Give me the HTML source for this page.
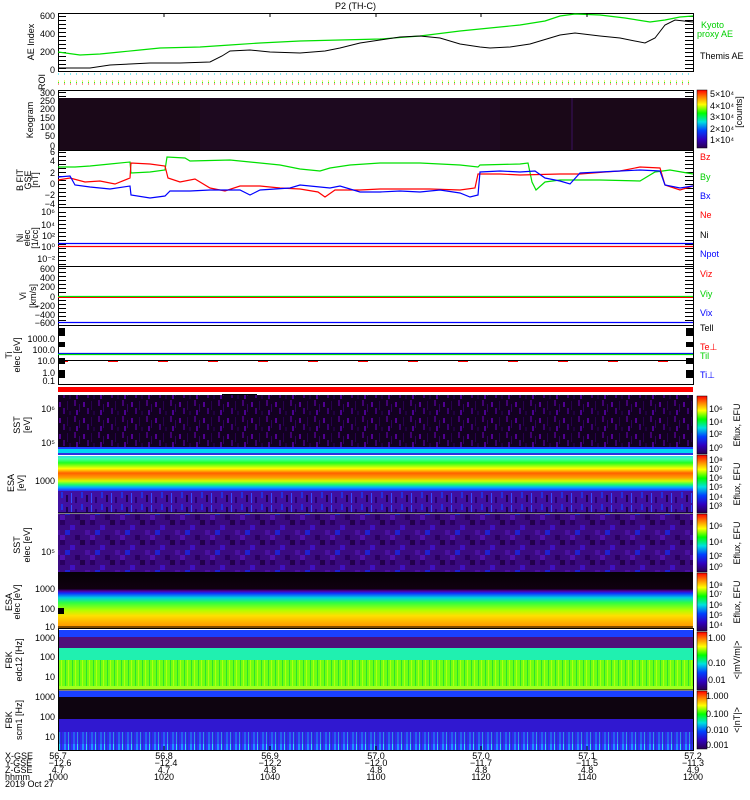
<!DOCTYPE html>
<html><head><meta charset="utf-8"><style>
html,body{margin:0;padding:0;background:#fff;width:750px;height:800px;overflow:hidden}
svg{display:block}
text{font-family:"Liberation Sans",sans-serif;font-size:9px;fill:#000}
</style></head><body>
<svg width="750" height="800" viewBox="0 0 750 800" xmlns="http://www.w3.org/2000/svg">
<defs>
<linearGradient id="cb" x1="0" y1="1" x2="0" y2="0">
<stop offset="0" stop-color="#2a0050"/><stop offset="0.15" stop-color="#3000c0"/><stop offset="0.3" stop-color="#0040ff"/><stop offset="0.45" stop-color="#00e0e0"/><stop offset="0.6" stop-color="#00ff00"/><stop offset="0.75" stop-color="#ffff00"/><stop offset="0.88" stop-color="#ff8000"/><stop offset="1" stop-color="#ff0000"/></linearGradient>
<linearGradient id="esai" x1="0" y1="0" x2="0" y2="1">
<stop offset="0" stop-color="#30e0e0"/><stop offset="0.05" stop-color="#40ffb0"/><stop offset="0.12" stop-color="#20ff20"/><stop offset="0.22" stop-color="#ffff00"/><stop offset="0.3" stop-color="#ff6000"/><stop offset="0.38" stop-color="#ffa000"/><stop offset="0.44" stop-color="#d0ff00"/><stop offset="0.5" stop-color="#20ff60"/><stop offset="0.55" stop-color="#00b0ff"/><stop offset="0.6" stop-color="#2040ff"/><stop offset="0.68" stop-color="#4010b0"/><stop offset="1" stop-color="#300880"/></linearGradient>
<linearGradient id="esae" x1="0" y1="0" x2="0" y2="1">
<stop offset="0" stop-color="#050005"/><stop offset="0.3" stop-color="#100010"/><stop offset="0.34" stop-color="#5000a0"/><stop offset="0.38" stop-color="#1030ff"/><stop offset="0.46" stop-color="#00d0e0"/><stop offset="0.55" stop-color="#30ff40"/><stop offset="0.68" stop-color="#b0ff00"/><stop offset="0.78" stop-color="#ffe000"/><stop offset="0.9" stop-color="#ffb000"/><stop offset="1" stop-color="#ff9000"/></linearGradient>
<pattern id="noise" width="24" height="16" patternUnits="userSpaceOnUse">
<rect width="24" height="16" fill="#120020"/>
<rect x="2" y="0" width="2" height="6" fill="#400070"/><rect x="7" y="4" width="1" height="8" fill="#300060"/><rect x="11" y="2" width="2" height="5" fill="#500090"/><rect x="15" y="8" width="2" height="6" fill="#3a0070"/><rect x="19" y="1" width="1" height="9" fill="#280050"/><rect x="4" y="10" width="2" height="5" fill="#4a0090"/><rect x="21" y="11" width="2" height="4" fill="#200040"/>
</pattern>
<pattern id="noise2" width="30" height="20" patternUnits="userSpaceOnUse">
<rect width="30" height="20" fill="#3a0a80"/>
<rect x="0" y="0" width="5" height="5" fill="#2a0060"/><rect x="10" y="5" width="5" height="5" fill="#4010c0"/><rect x="20" y="0" width="5" height="5" fill="#22004a"/><rect x="5" y="10" width="5" height="5" fill="#2020d0"/><rect x="15" y="15" width="5" height="5" fill="#2a0060"/><rect x="25" y="10" width="5" height="5" fill="#4a10a0"/><rect x="0" y="15" width="5" height="5" fill="#5010b0"/>
</pattern>
<pattern id="noise3" width="20" height="12" patternUnits="userSpaceOnUse">
<rect width="20" height="12" fill="#4010a0"/>
<rect x="1" y="0" width="2" height="6" fill="#2030e0"/><rect x="6" y="3" width="2" height="7" fill="#200050"/><rect x="11" y="1" width="1" height="10" fill="#3050ff"/><rect x="15" y="5" width="2" height="6" fill="#280070"/>
</pattern>
<pattern id="stripe" width="9" height="10" patternUnits="userSpaceOnUse">
<rect width="9" height="10" fill="#3030ff"/><rect x="1" width="2" height="10" fill="#2090ff"/><rect x="5" width="1" height="10" fill="#30e0f0"/><rect x="7" width="1" height="10" fill="#2040c0"/>
</pattern>
<pattern id="gstripe" width="7" height="10" patternUnits="userSpaceOnUse">
<rect width="7" height="10" fill="#70ff10"/><rect x="2" width="1" height="10" fill="#30e030"/><rect x="5" width="1" height="10" fill="#b0ff10"/></pattern>
<pattern id="lt" width="8" height="4" patternUnits="userSpaceOnUse"><rect x="0" y="0" width="8" height="1" fill="#000"/></pattern>
</defs>

<text x="335" y="9" font-size="10">P2 (TH-C)</text>

<!-- left minor ticks -->
<rect x="58" y="14" width="8" height="56" fill="url(#lt)"/>
<rect x="58" y="92" width="8" height="58" fill="url(#lt)"/>
<rect x="58" y="152" width="8" height="54" fill="url(#lt)"/>
<rect x="58" y="209" width="8" height="56" fill="url(#lt)"/>
<rect x="58" y="268" width="8" height="56" fill="url(#lt)"/>
<rect x="685" y="92" width="8" height="58" fill="url(#lt)"/>
<rect x="685" y="152" width="8" height="54" fill="url(#lt)"/>
<rect x="685" y="209" width="8" height="56" fill="url(#lt)"/>
<rect x="685" y="268" width="8" height="56" fill="url(#lt)"/>
<rect x="685" y="14" width="8" height="56" fill="url(#lt)"/>

<!-- AE panel -->
<rect x="58.5" y="13.5" width="635" height="58" fill="none" stroke="#000"/>
<polyline fill="none" stroke="#00e000" stroke-width="1.2" points="58,52 80,55 100,54 120,52 140,50 160,48 200,47 230,45 260,43 300,41 340,40 380,39 420,36 460,31 500,27 520,25 545,21 560,16 575,14 600,15 625,18 650,22 665,20 680,17 693,16"/>
<polyline fill="none" stroke="#000" stroke-width="1" points="58,68 90,68 110,65 130,64 150,63 180,63 210,62 222,56 230,51 250,50 270,52 300,53 325,51 340,48 360,43 380,40 400,37 420,36 440,38 460,44 480,47 490,48 510,47 530,44 550,38 560,35 575,33 600,36 620,38 645,43 655,38 665,25 675,20 693,22"/>
<text transform="translate(34,42) rotate(-90)" text-anchor="middle" font-size="8">AE Index</text>
<text x="55" y="19" text-anchor="end">600</text><text x="55" y="37" text-anchor="end">400</text><text x="55" y="55" text-anchor="end">200</text><text x="55" y="73" text-anchor="end">0</text>
<text x="701" y="28" style="fill:#00d000">Kyoto</text>
<text x="697" y="37" style="fill:#00d000">proxy AE</text>
<text x="700" y="59">Themis AE</text>

<!-- ROI -->
<line x1="58" y1="74" x2="693" y2="74" stroke="#00d8e8" stroke-dasharray="1,5"/>
<line x1="58" y1="81" x2="693" y2="81" stroke="#e8e800" stroke-dasharray="1,5"/>
<line x1="58" y1="82.5" x2="693" y2="82.5" stroke="#20ff20" stroke-dasharray="1,5"/>
<line x1="58" y1="84" x2="693" y2="84" stroke="#ff2020" stroke-dasharray="1,5"/>
<line x1="58" y1="90.5" x2="693" y2="90.5" stroke="#000"/>
<text transform="translate(45,82) rotate(-90)" text-anchor="middle" font-size="8">ROI</text>

<!-- Keogram -->
<rect x="58" y="98" width="635" height="52" fill="#1a0818"/>
<rect x="200" y="98" width="300" height="52" fill="#1f0a22" opacity="0.7"/>
<line x1="572" y1="98" x2="572" y2="150" stroke="#3a1060"/>
<rect x="58.5" y="90.5" width="635" height="60" fill="none" stroke="#000"/>
<text transform="translate(33,120) rotate(-90)" text-anchor="middle" font-size="8">Keogram</text>
<g font-size="8"><text x="55" y="96" text-anchor="end">300</text><text x="55" y="104" text-anchor="end">250</text><text x="55" y="112" text-anchor="end">200</text><text x="55" y="121" text-anchor="end">150</text><text x="55" y="130" text-anchor="end">100</text><text x="55" y="139" text-anchor="end">50</text><text x="55" y="149" text-anchor="end">0</text></g>
<rect x="697" y="90" width="10" height="58" fill="url(#cb)" stroke="#000" stroke-width="0.5"/>
<g font-size="8"><text x="710" y="97">5×10⁴</text><text x="710" y="109">4×10⁴</text><text x="710" y="120">3×10⁴</text><text x="710" y="132">2×10⁴</text><text x="710" y="143">1×10⁴</text></g>
<text transform="translate(742,112) rotate(-90)" text-anchor="middle" font-size="7">[counts]</text>

<!-- B panel -->
<rect x="58.5" y="150.5" width="635" height="57" fill="none" stroke="#000"/>
<polyline fill="none" stroke="#00e000" stroke-width="1.2" points="58,167 75,167 90,166 110,164 130,162 131,173 150,172 165,170 167,157 185,158 190,161 230,160 250,162 280,165 300,169 320,171 330,168 350,165 380,163 420,163 460,165 478,167 480,165 520,164 528,163 532,182 536,190 545,182 560,180 600,180 640,181 655,172 670,170 693,174"/>
<polyline fill="none" stroke="#ff0000" stroke-width="1.2" points="58,180 70,178 85,182 100,181 115,184 130,178 131,163 150,164 165,166 168,178 180,182 195,179 210,188 225,191 240,186 260,186 280,188 300,189 318,192 325,197 335,190 360,190 380,189 400,189 430,189 460,190 475,188 478,174 500,174 520,175 560,174 580,174 605,172 620,171 640,167 660,168 665,185 680,190 693,186"/>
<polyline fill="none" stroke="#0000ff" stroke-width="1.2" points="58,177 70,176 75,185 90,187 110,189 130,186 131,195 150,198 165,196 170,191 190,191 210,190 240,190 250,195 260,190 290,188 300,185 330,188 340,186 360,192 380,192 400,191 420,192 440,190 460,193 470,197 478,195 480,172 500,171 520,172 535,171 545,178 560,181 570,184 580,173 600,172 620,171 640,170 660,171 665,185 680,188 693,186"/>
<text transform="translate(23,180) rotate(-90)" text-anchor="middle" font-size="7">B FIT</text>
<text transform="translate(31,180) rotate(-90)" text-anchor="middle" font-size="6">GSE</text>
<text transform="translate(38,180) rotate(-90)" text-anchor="middle" font-size="7">[nT]</text>
<g font-size="8"><text x="55" y="155" text-anchor="end">6</text><text x="55" y="164" text-anchor="end">4</text><text x="55" y="176" text-anchor="end">2</text><text x="55" y="187" text-anchor="end">0</text><text x="55" y="198" text-anchor="end">−2</text><text x="55" y="207" text-anchor="end">−4</text></g>
<text x="700" y="160" style="fill:#ff0000">Bz</text><text x="700" y="180" style="fill:#00d000">By</text><text x="700" y="199" style="fill:#0000ff">Bx</text>

<!-- Ni -->
<rect x="58.5" y="207.5" width="635" height="59" fill="none" stroke="#000"/>
<line x1="58" y1="243.5" x2="693" y2="243.5" stroke="#0000ff" stroke-width="1.2"/>
<line x1="58" y1="246.5" x2="693" y2="246.5" stroke="#ff0000" stroke-width="1.2"/>
<text transform="translate(23,238) rotate(-90)" text-anchor="middle" font-size="7">Ni</text>
<text transform="translate(30,238) rotate(-90)" text-anchor="middle" font-size="6">elec</text>
<text transform="translate(38,238) rotate(-90)" text-anchor="middle" font-size="7">[1/cc]</text>
<g font-size="8"><text x="55" y="215" text-anchor="end">10⁶</text><text x="55" y="228" text-anchor="end">10⁴</text><text x="55" y="239" text-anchor="end">10²</text><text x="55" y="250" text-anchor="end">10⁰</text><text x="55" y="262" text-anchor="end">10⁻²</text></g>
<text x="700" y="218" style="fill:#ff0000">Ne</text><text x="700" y="238">Ni</text><text x="700" y="257" style="fill:#0000ff">Npot</text>

<!-- Vi -->
<rect x="58.5" y="266.5" width="635" height="59" fill="none" stroke="#000"/>
<line x1="58" y1="296.5" x2="693" y2="296.5" stroke="#00e000" stroke-width="1.2"/>
<line x1="58" y1="297.5" x2="693" y2="297.5" stroke="#ff0000" stroke-width="1"/>
<line x1="58" y1="322.5" x2="693" y2="322.5" stroke="#0000ff" stroke-width="1.2"/>
<text transform="translate(26,296) rotate(-90)" text-anchor="middle" font-size="7">Vi</text>
<text transform="translate(36,296) rotate(-90)" text-anchor="middle" font-size="7">[km/s]</text>
<g font-size="8"><text x="55" y="272" text-anchor="end">600</text><text x="55" y="281" text-anchor="end">400</text><text x="55" y="290" text-anchor="end">200</text><text x="55" y="300" text-anchor="end">0</text><text x="55" y="309" text-anchor="end">−200</text><text x="55" y="318" text-anchor="end">−400</text><text x="55" y="326" text-anchor="end">−600</text></g>
<text x="700" y="277" style="fill:#ff0000">Viz</text><text x="700" y="297" style="fill:#00d000">Viy</text><text x="700" y="316" style="fill:#0000ff">Vix</text>

<!-- Ti -->
<rect x="58.5" y="325.5" width="635" height="59" fill="none" stroke="#000"/>
<line x1="58" y1="353.5" x2="693" y2="353.5" stroke="#0000ff" stroke-width="1.2"/>
<line x1="58" y1="354.5" x2="693" y2="354.5" stroke="#00e000" stroke-width="1.2"/>
<line x1="58" y1="360.5" x2="693" y2="360.5" stroke="#000" stroke-width="1"/>
<line x1="58" y1="361.5" x2="693" y2="361.5" stroke="#ff0000" stroke-width="1" stroke-dasharray="10,40"/>
<rect x="58" y="328" width="7" height="8" fill="#000"/><rect x="58" y="342" width="7" height="5" fill="#000"/><rect x="58" y="358" width="7" height="6" fill="#000"/><rect x="58" y="370" width="7" height="8" fill="#000"/>
<rect x="686" y="328" width="7" height="8" fill="#000"/><rect x="686" y="342" width="7" height="5" fill="#000"/><rect x="686" y="358" width="7" height="6" fill="#000"/><rect x="686" y="370" width="7" height="8" fill="#000"/>
<text transform="translate(12,355) rotate(-90)" text-anchor="middle" font-size="7">Ti</text>
<text transform="translate(20,355) rotate(-90)" text-anchor="middle" font-size="6">elec [eV]</text>
<g font-size="8"><text x="55" y="342" text-anchor="end">1000.0</text><text x="55" y="353" text-anchor="end">100.0</text><text x="55" y="364" text-anchor="end">10.0</text><text x="55" y="376" text-anchor="end">1.0</text><text x="55" y="384" text-anchor="end">0.1</text></g>
<text x="700" y="331">Tell</text><text x="700" y="350" style="fill:#ff0000">Te⊥</text><text x="700" y="359" style="fill:#00d000">Til</text><text x="700" y="378" style="fill:#0000ff">Ti⊥</text>

<!-- red bar -->
<rect x="58" y="387" width="635" height="5" fill="#ff0000"/>
<rect x="222" y="394" width="35" height="2" fill="#000"/>

<!-- SST ions -->
<rect x="58" y="395" width="635" height="52" fill="url(#noise)"/>
<rect x="58" y="447" width="635" height="2" fill="#2040ff"/>
<rect x="58" y="449" width="635" height="4" fill="#00d8f0"/>
<rect x="58" y="453" width="635" height="2" fill="#3030e0"/>
<text transform="translate(20,425) rotate(-90)" text-anchor="middle" font-size="7">SST</text>
<text transform="translate(30,425) rotate(-90)" text-anchor="middle" font-size="6">[eV]</text>
<g font-size="8"><text x="55" y="412" text-anchor="end">10⁶</text><text x="55" y="446" text-anchor="end">10⁵</text></g>

<!-- ESA ions -->
<rect x="58" y="456" width="635" height="57" fill="url(#esai)"/>
<rect x="58" y="491" width="635" height="21" fill="url(#noise3)"/>
<line x1="58" y1="455.5" x2="693" y2="455.5" stroke="#fff"/>
<line x1="58" y1="513" x2="693" y2="513" stroke="#000"/>
<text transform="translate(14,483) rotate(-90)" text-anchor="middle" font-size="7">ESA</text>
<text transform="translate(24,483) rotate(-90)" text-anchor="middle" font-size="6">[eV]</text>
<text x="55" y="484" text-anchor="end" font-size="8">1000</text>

<!-- SST elec -->
<rect x="58" y="514" width="635" height="58" fill="url(#noise2)"/>
<text transform="translate(20,545) rotate(-90)" text-anchor="middle" font-size="7">SST</text>
<text transform="translate(30,545) rotate(-90)" text-anchor="middle" font-size="6">elec [eV]</text>
<text x="55" y="555" text-anchor="end" font-size="8">10⁵</text>

<!-- ESA elec -->
<rect x="58" y="572" width="635" height="56" fill="url(#esae)"/>
<line x1="58" y1="627" x2="693" y2="627" stroke="#000"/>
<rect x="58" y="608" width="6" height="6" fill="#000"/>
<text transform="translate(12,602) rotate(-90)" text-anchor="middle" font-size="7">ESA</text>
<text transform="translate(20,602) rotate(-90)" text-anchor="middle" font-size="6">elec [eV]</text>
<g font-size="8"><text x="55" y="592" text-anchor="end">1000</text><text x="55" y="612" text-anchor="end">100</text><text x="55" y="630" text-anchor="end">10</text></g>

<!-- FBK1 -->
<rect x="58" y="630" width="635" height="7" fill="#1a40ff"/>
<rect x="58" y="637" width="635" height="11" fill="#50107a"/>
<rect x="58" y="648" width="635" height="12" fill="#20f0b0"/>
<rect x="58" y="660" width="635" height="30" fill="url(#gstripe)"/>
<rect x="58" y="686" width="635" height="4" fill="#a0ff20"/>
<line x1="58" y1="690" x2="693" y2="690" stroke="#000"/>
<text transform="translate(12,660) rotate(-90)" text-anchor="middle" font-size="7">FBK</text>
<text transform="translate(22,660) rotate(-90)" text-anchor="middle" font-size="6">edc12 [Hz]</text>
<g font-size="8"><text x="55" y="641" text-anchor="end">1000</text><text x="55" y="660" text-anchor="end">100</text><text x="55" y="680" text-anchor="end">10</text></g>

<!-- FBK2 -->
<rect x="58" y="691" width="635" height="6" fill="#1a40ff"/>
<rect x="58" y="697" width="635" height="22" fill="#0e0410"/>
<rect x="58" y="719" width="635" height="25" fill="#3018d0"/>
<rect x="58" y="732" width="635" height="12" fill="url(#stripe)" opacity="0.6"/>
<rect x="58" y="744" width="635" height="6" fill="url(#stripe)"/>
<text transform="translate(12,720) rotate(-90)" text-anchor="middle" font-size="7">FBK</text>
<text transform="translate(22,720) rotate(-90)" text-anchor="middle" font-size="6">scm1 [Hz]</text>
<g font-size="8"><text x="55" y="700" text-anchor="end">1000</text><text x="55" y="720" text-anchor="end">100</text><text x="55" y="740" text-anchor="end">10</text></g>

<!-- right colorbars -->
<g stroke="#000" stroke-width="0.5">
<rect x="697" y="396" width="10" height="58" fill="url(#cb)"/>
<rect x="697" y="455" width="10" height="58" fill="url(#cb)"/>
<rect x="697" y="514" width="10" height="58" fill="url(#cb)"/>
<rect x="697" y="573" width="10" height="58" fill="url(#cb)"/>
<rect x="697" y="632" width="10" height="58" fill="url(#cb)"/>
<rect x="697" y="691" width="10" height="58" fill="url(#cb)"/>
</g>
<g font-size="8">
<text x="709" y="412">10⁶</text><text x="709" y="425">10⁴</text><text x="709" y="437">10²</text><text x="709" y="451">10⁰</text>
<text x="709" y="463">10⁸</text><text x="709" y="472">10⁷</text><text x="709" y="481">10⁶</text><text x="709" y="490">10⁵</text><text x="709" y="500">10⁴</text><text x="709" y="509">10³</text>
<text x="709" y="529">10⁶</text><text x="709" y="545">10⁴</text><text x="709" y="559">10²</text><text x="709" y="570">10⁰</text>
<text x="709" y="588">10⁸</text><text x="709" y="597">10⁷</text><text x="709" y="608">10⁶</text><text x="709" y="618">10⁵</text><text x="709" y="628">10⁴</text>
<text x="708" y="641">1.00</text><text x="708" y="666">0.10</text><text x="708" y="683">0.01</text>
<text x="706" y="699">1.000</text><text x="706" y="717">0.100</text><text x="706" y="733">0.010</text><text x="706" y="748">0.001</text>
</g>
<g font-size="7">
<text transform="translate(740,425) rotate(-90)" text-anchor="middle">Eflux, EFU</text>
<text transform="translate(740,484) rotate(-90)" text-anchor="middle">Eflux, EFU</text>
<text transform="translate(740,543) rotate(-90)" text-anchor="middle">Eflux, EFU</text>
<text transform="translate(740,602) rotate(-90)" text-anchor="middle">Eflux, EFU</text>
<text transform="translate(740,660) rotate(-90)" text-anchor="middle">&lt;|mV/m|&gt;</text>
<text transform="translate(740,720) rotate(-90)" text-anchor="middle">&lt;|nT|&gt;</text>
</g>

<!-- ticks -->
<g stroke="#000">
<line x1="164" y1="13" x2="164" y2="17"/><line x1="270" y1="13" x2="270" y2="17"/><line x1="376" y1="13" x2="376" y2="17"/><line x1="481" y1="13" x2="481" y2="17"/><line x1="587" y1="13" x2="587" y2="17"/>
<line x1="164" y1="750" x2="164" y2="746"/><line x1="270" y1="750" x2="270" y2="746"/><line x1="376" y1="750" x2="376" y2="746"/><line x1="481" y1="750" x2="481" y2="746"/><line x1="587" y1="750" x2="587" y2="746"/>
</g>
<rect x="58.5" y="628.5" width="635" height="122" fill="none" stroke="#000"/>

<!-- bottom labels -->
<g font-size="9">
<text x="5" y="759">X-GSE</text><text x="5" y="766">Y-GSE</text><text x="5" y="773">Z-GSE</text><text x="5" y="780">hhmm</text><text x="5" y="787">2019 Oct 27</text>
<g text-anchor="middle">
<text x="58" y="759">56.7</text><text x="60" y="766">−12.6</text><text x="58" y="773">4.7</text><text x="58" y="780">1000</text>
<text x="164" y="759">56.8</text><text x="166" y="766">−12.4</text><text x="164" y="773">4.7</text><text x="164" y="780">1020</text>
<text x="270" y="759">56.9</text><text x="270" y="766">−12.2</text><text x="270" y="773">4.8</text><text x="270" y="780">1040</text>
<text x="376" y="759">57.0</text><text x="376" y="766">−12.0</text><text x="376" y="773">4.8</text><text x="376" y="780">1100</text>
<text x="481" y="759">57.0</text><text x="481" y="766">−11.7</text><text x="481" y="773">4.8</text><text x="481" y="780">1120</text>
<text x="587" y="759">57.1</text><text x="587" y="766">−11.5</text><text x="587" y="773">4.8</text><text x="587" y="780">1140</text>
<text x="693" y="759">57.2</text><text x="693" y="766">−11.3</text><text x="693" y="773">4.9</text><text x="693" y="780">1200</text>
</g></g>
</svg>
</body></html>
